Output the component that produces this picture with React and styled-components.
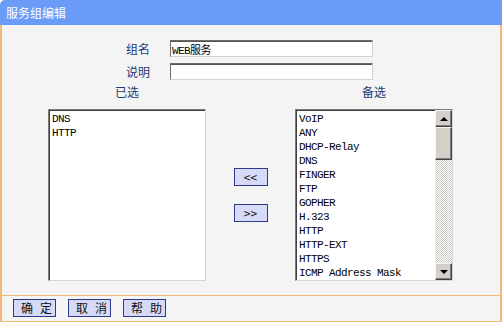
import React from "react";
import styled, { createGlobalStyle } from "styled-components";

const GlobalStyle = createGlobalStyle`
  body {
    margin: 0;
    background: #ffffff;
    font-family: "Noto Sans CJK SC", sans-serif;
  }
`;

const Panel = styled.div`
  display: flex;
  flex-direction: column;
  width: 502px;
  height: 322px;
  overflow: hidden;
`;

const TitleBar = styled.div`
  height: 25px;
  line-height: 25px;
  padding-left: 6px;
  background: #6a9bf6;
  color: #ffffff;
  font-size: 12px;
  border-top-left-radius: 5px;
`;

const Body = styled.div`
  flex: 1;
  display: flex;
  flex-direction: column;
  background: #f4f4f4;
  border-left: 2px solid #f3b875;
  border-right: 2px solid #f3b875;
`;

const Form = styled.div`
  height: 270px;
  display: flex;
  flex-direction: column;
`;

const FieldRow = styled.div`
  display: flex;
  align-items: center;
  height: 17px;
  margin-top: ${(p) => p.$top}px;
`;

const Label = styled.span`
  width: 148px;
  margin-right: 20px;
  text-align: right;
  font-size: 12px;
  color: #1d3a78;
`;

const TextInput = styled.input`
  box-sizing: border-box;
  width: 203px;
  height: 17px;
  padding: 0 1px;
  border: 1px solid;
  border-color: #6b6b6b #d2d2d2 #d2d2d2 #6b6b6b;
  box-shadow: inset 0 1px 0 #555555;
  background: #ffffff;
  font-family: "Liberation Mono", "Noto Sans CJK SC", monospace;
  font-size: 11px;
  letter-spacing: -0.6px;
  color: #000;
  outline: none;
`;

const ListsRow = styled.div`
  display: flex;
  margin-top: 4px;
  padding-left: 46px;
`;

const ListColumn = styled.div`
  display: flex;
  flex-direction: column;
  width: 158px;
`;

const Heading = styled.div`
  height: 16px;
  line-height: 16px;
  margin-bottom: 9px;
  text-align: center;
  font-size: 12px;
  color: #1d3a78;
`;

const ListBox = styled.div`
  box-sizing: border-box;
  display: flex;
  height: 172px;
  background: #ffffff;
  border: 1px solid;
  border-color: #7a7a7a #d6d6d6 #d6d6d6 #7a7a7a;
  box-shadow: inset 1px 1px 0 #404040;
`;

const Items = styled.div`
  flex: 1;
  padding: 2px 0 0 3px;
  overflow: hidden;
`;

const Item = styled.div`
  height: 14px;
  line-height: 14px;
  font-family: "Liberation Mono", monospace;
  font-size: 11px;
  letter-spacing: -0.6px;
  color: #000;
  white-space: pre;
`;

const ScrollBar = styled.div`
  display: flex;
  flex-direction: column;
  width: 17px;
  background-color: #ffffff;
  background-image: repeating-conic-gradient(#cfcbc4 0 25%, #ffffff 0 50%);
  background-size: 2px 2px;
`;

const Raised = styled.div`
  box-sizing: border-box;
  height: ${(p) => p.$h}px;
  display: flex;
  align-items: center;
  justify-content: center;
  background: #d4d0c8;
  border: 1px solid;
  border-color: #f4f4f4 #404040 #404040 #f4f4f4;
  box-shadow: inset -1px -1px 0 #808080;
`;

const Spacer = styled.div`
  flex: 1;
`;

const Arrow = styled.span`
  width: 0;
  height: 0;
  border-left: 4px solid transparent;
  border-right: 4px solid transparent;
  ${(p) =>
    p.$dir === "up"
      ? "border-bottom: 4px solid #000;"
      : "border-top: 4px solid #000;"}
`;

const MiddleColumn = styled.div`
  width: 89px;
  display: flex;
  flex-direction: column;
  align-items: center;
  padding-top: 84px;
`;

const Button = styled.button`
  box-sizing: border-box;
  width: ${(p) => p.$w}px;
  height: 18px;
  margin: 0;
  margin-top: ${(p) => p.$top || 0}px;
  padding: 0 0 0 ${(p) => p.$spread || 0}px;
  background: #d6daf6;
  border: 1px solid #2f3b8a;
  font-family: "Noto Sans CJK SC", sans-serif;
  font-size: 12px;
  line-height: 16px;
  letter-spacing: ${(p) => p.$spread || 0}px;
  color: #111;
  white-space: pre;
`;

const Footer = styled.div`
  box-sizing: border-box;
  height: 27px;
  display: flex;
  gap: 12px;
  padding: 3px 0 0 11px;
  border-top: 1px solid #f3b875;
  border-bottom: 1px solid #f3b875;
`;

const selected = ["DNS", "HTTP"];
const available = [
  "VoIP",
  "ANY",
  "DHCP-Relay",
  "DNS",
  "FINGER",
  "FTP",
  "GOPHER",
  "H.323",
  "HTTP",
  "HTTP-EXT",
  "HTTPS",
  "ICMP Address Mask",
];

export default function App() {
  return (
    <Panel>
      <GlobalStyle />
      <TitleBar>服务组编辑</TitleBar>
      <Body>
        <Form>
          <FieldRow $top={15}>
            <Label>组名</Label>
            <TextInput defaultValue="WEB服务" />
          </FieldRow>
          <FieldRow $top={6}>
            <Label>说明</Label>
            <TextInput defaultValue="" />
          </FieldRow>
          <ListsRow>
            <ListColumn>
              <Heading>已选</Heading>
              <ListBox>
                <Items>
                  {selected.map((s) => (
                    <Item key={s}>{s}</Item>
                  ))}
                </Items>
              </ListBox>
            </ListColumn>
            <MiddleColumn>
              <Button $w={34}>&lt;&lt;</Button>
              <Button $w={34} $top={18}>&gt;&gt;</Button>
            </MiddleColumn>
            <ListColumn>
              <Heading>备选</Heading>
              <ListBox>
                <Items>
                  {available.map((s) => (
                    <Item key={s}>{s}</Item>
                  ))}
                </Items>
                <ScrollBar>
                  <Raised $h={17}>
                    <Arrow $dir="up" />
                  </Raised>
                  <Raised $h={33} />
                  <Spacer />
                  <Raised $h={17}>
                    <Arrow $dir="down" />
                  </Raised>
                </ScrollBar>
              </ListBox>
            </ListColumn>
          </ListsRow>
        </Form>
        <Footer>
          <Button $w={43} $spread={7}>确定</Button>
          <Button $w={43} $spread={7}>取消</Button>
          <Button $w={43} $spread={7}>帮助</Button>
        </Footer>
      </Body>
    </Panel>
  );
}
